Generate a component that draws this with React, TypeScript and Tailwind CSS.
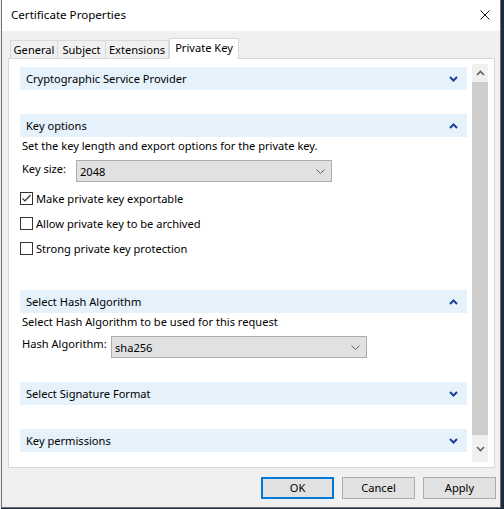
import React from 'react'

const FONT = { fontFamily: '"Noto Sans", "Liberation Sans", sans-serif' }

const Chevron = ({ up }: { up?: boolean }) => (
  <svg width="9" height="6" viewBox="0 0 9 6" className="shrink-0">
    <polyline
      points={up ? '1,5 4.5,1.5 8,5' : '1,1 4.5,4.5 8,1'}
      fill="none"
      stroke="#1e3f99"
      strokeWidth="2"
    />
  </svg>
)

const SectionHeader = ({ title, up }: { title: string; up?: boolean }) => (
  <div className="flex h-[23px] items-center justify-between bg-[#e5f1fb] pl-[6px] pr-[9px]">
    <span>{title}</span>
    <Chevron up={up} />
  </div>
)

const Select = ({ value, width }: { value: string; width: string }) => (
  <div
    className={`flex h-[22px] ${width} items-center justify-between border border-[#adadad] bg-[#e1e1e1] pl-[3px] pr-[6px]`}
  >
    <span className="pt-[2px]">{value}</span>
    <svg width="9" height="5" viewBox="0 0 9 5">
      <polyline points="0.5,0.5 4.5,4.5 8.5,0.5" fill="none" stroke="#606060" strokeWidth="1" />
    </svg>
  </div>
)

const Checkbox = ({ label, checked }: { label: string; checked?: boolean }) => (
  <div className="flex h-[13px] items-center gap-[3px]">
    <div className="flex h-[13px] w-[13px] items-center justify-center border border-[#333333] bg-white">
      {checked && (
        <svg width="11" height="11" viewBox="0 0 11 11">
          <polyline points="1.5,5.5 4,8 9.5,2" fill="none" stroke="#333333" strokeWidth="1.2" />
        </svg>
      )}
    </div>
    <span>{label}</span>
  </div>
)

const Button = ({ label, primary }: { label: string; primary?: boolean }) => (
  <div
    className={`flex h-[22px] w-[73px] items-center justify-center bg-[#e1e1e1] ${
      primary ? 'border-2 border-[#0078d7]' : 'border border-[#adadad]'
    }`}
  >
    {label}
  </div>
)

const tabs = [
  { label: 'General', w: 'w-[48px] border-l' },
  { label: 'Subject', w: 'w-[48px]' },
  { label: 'Extensions', w: 'w-[63px]' },
]

export default function App() {
  return (
    <div
      className="flex h-[509px] w-[504px] overflow-hidden bg-[#1b2b40] text-[11.1px] leading-[14px] text-black"
      style={FONT}
    >
      <div className="h-[509px] w-[1px] bg-[#f0f0f0]" />
      <div className="flex h-[508px] w-[500px] flex-col border-x border-b border-[#6e6e6e]">
        {/* title bar */}
        <div className="flex h-[31px] items-center justify-between bg-white pl-[9px] pr-[9px] text-[11.6px]">
          <span className="pb-[2px]">Certificate Properties</span>
          <svg width="10" height="10" viewBox="0 0 10 10" className="mr-[1px] mb-[1px]">
            <path d="M0.5 0.5 L9.5 9.5 M9.5 0.5 L0.5 9.5" stroke="#111111" strokeWidth="1" />
          </svg>
        </div>

        {/* body */}
        <div className="flex flex-1 flex-col bg-[#f0f0f0] pl-[6px] pr-[4px] pt-[7px]">
          {/* tabs */}
          <div className="flex h-[20px] items-end pl-[2px]">
            {tabs.map((t) => (
              <div
                key={t.label}
                className={`flex h-[18px] ${t.w} items-center justify-center border-r border-t border-[#d9d9d9] pt-[1px]`}
              >
                {t.label}
              </div>
            ))}
            <div className="relative z-10 -mb-px flex h-[21px] w-[70px] items-center justify-center border-x border-t border-[#d9d9d9] bg-white pb-[2px]">
              Private Key
            </div>
          </div>

          {/* panel */}
          <div className="flex h-[410px] w-[487px] border border-[#d9d9d9] bg-white pt-[5px]">
            <div className="flex w-[458px] flex-col pl-[11px] pt-[3px]">
              <SectionHeader title="Cryptographic Service Provider" />
              <div className="h-[24px]" />
              <SectionHeader title="Key options" up />
              <div className="flex h-[16px] items-center pl-[2px] pt-[1px]">
                Set the key length and export options for the private key.
              </div>
              <div className="mt-[7px] flex items-start pl-[2px]">
                <span className="w-[54px] pt-[2px]">Key size:</span>
                <Select value="2048" width="w-[256px]" />
              </div>
              <div className="mt-[10px] flex flex-col gap-[12px]">
                <Checkbox label="Make private key exportable" checked />
                <Checkbox label="Allow private key to be archived" />
                <Checkbox label="Strong private key protection" />
              </div>
              <div className="h-[35px]" />
              <SectionHeader title="Select Hash Algorithm" up />
              <div className="flex h-[16px] items-center pl-[2px] pt-[1px]">
                Select Hash Algorithm to be used for this request
              </div>
              <div className="mt-[7px] flex items-start pl-[2px]">
                <span className="w-[89px] whitespace-nowrap pt-[1px]">Hash Algorithm:</span>
                <Select value="sha256" width="w-[256px]" />
              </div>
              <div className="h-[24px]" />
              <SectionHeader title="Select Signature Format" />
              <div className="h-[24px]" />
              <SectionHeader title="Key permissions" />
            </div>

            {/* scrollbar */}
            <div className="ml-[5px] flex h-[398px] w-[16px] flex-col bg-[#f0f0f0]">
              <div className="flex h-[18px] items-center justify-center">
                <svg width="9" height="6" viewBox="0 0 9 6">
                  <polyline points="1,5 4.5,1.5 8,5" fill="none" stroke="#606060" strokeWidth="1.6" />
                </svg>
              </div>
              <div className="h-[353px] bg-[#cdcdcd]" />
              <div className="flex flex-1 items-center justify-center">
                <svg width="9" height="6" viewBox="0 0 9 6">
                  <polyline points="1,1 4.5,4.5 8,1" fill="none" stroke="#606060" strokeWidth="1.6" />
                </svg>
              </div>
            </div>
          </div>

          {/* buttons */}
          <div className="mt-[9px] flex justify-end gap-[8px]">
            <Button label="OK" primary />
            <Button label="Cancel" />
            <Button label="Apply" />
          </div>
        </div>
      </div>
    </div>
  )
}
